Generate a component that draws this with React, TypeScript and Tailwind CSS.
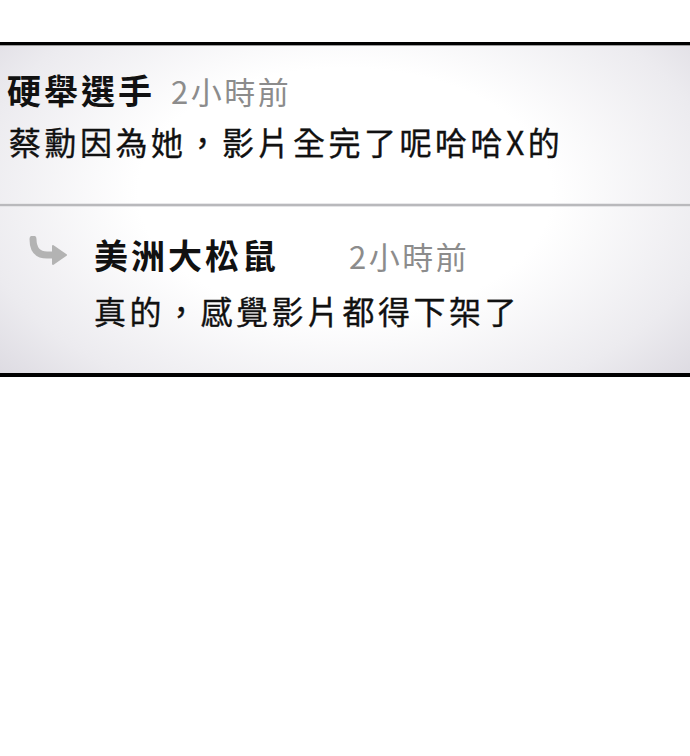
import React from "react";

type Comment = {
  name: string;
  time: string;
  body: string;
};

const main: Comment = {
  name: "硬舉選手",
  time: "2小時前",
  body: "蔡勳因為她，影片全完了呢哈哈X的",
};

const reply: Comment = {
  name: "美洲大松鼠",
  time: "2小時前",
  body: "真的，感覺影片都得下架了",
};

function ReplyArrow() {
  return (
    <svg width="40" height="30" viewBox="0 0 40 30" className="-mt-0.5 shrink-0">
      <path d="M5 3 Q5 19 19 19 L28 19" fill="none" stroke="#b3b3b3" strokeWidth="7" strokeLinecap="round" />
      <polygon points="25,10 38,19 25,28" fill="#b3b3b3" stroke="#b3b3b3" strokeWidth="2" strokeLinejoin="round" />
    </svg>
  );
}

export default function App() {
  return (
    <main className="w-[690px] h-[756px] bg-white font-['Noto_Sans_CJK_TC','Noto_Sans',sans-serif] text-[#111]">
      <div className="h-[42px]" />

      {/* comment panel */}
      <section className="border-t-[3px] border-b-4 border-black bg-[radial-gradient(ellipse_75%_95%_at_50%_45%,#ffffff_40%,#ecebef_72%,#d3d0d9_100%)] shadow-[inset_0_1px_0_#9c9c9c]">
        {/* main comment */}
        <div className="pl-[7px] pt-[28px] pb-[47px]">
          <div className="flex items-center leading-none">
            <span className="text-[34px] font-bold tracking-[3px]">{main.name}</span>
            <span className="ml-[16px] text-[31px] tracking-[2.5px] text-[#8c8c8c]">{main.time}</span>
          </div>
          <p className="mt-[18px] pl-[2px] text-[32px] font-normal leading-none tracking-[3.5px] [-webkit-text-stroke:0.35px_#111]">{main.body}</p>
        </div>

        <div className="h-[2px] bg-[#b9b9bc] shadow-[0_1px_0_#e4e4e6,0_-1px_0_#e8e8ea]" />

        {/* reply */}
        <div className="flex pl-[28px] pt-[32px] pb-[47px]">
          <ReplyArrow />
          <div className="ml-[26px]">
            <div className="flex items-center leading-none">
              <span className="text-[34px] font-bold tracking-[3px]">{reply.name}</span>
              <span className="ml-[70px] text-[31px] tracking-[2.5px] text-[#8c8c8c]">{reply.time}</span>
            </div>
            <p className="mt-[22px] text-[32px] font-normal leading-none tracking-[3.5px] [-webkit-text-stroke:0.35px_#111]">{reply.body}</p>
          </div>
        </div>
      </section>
    </main>
  );
}
